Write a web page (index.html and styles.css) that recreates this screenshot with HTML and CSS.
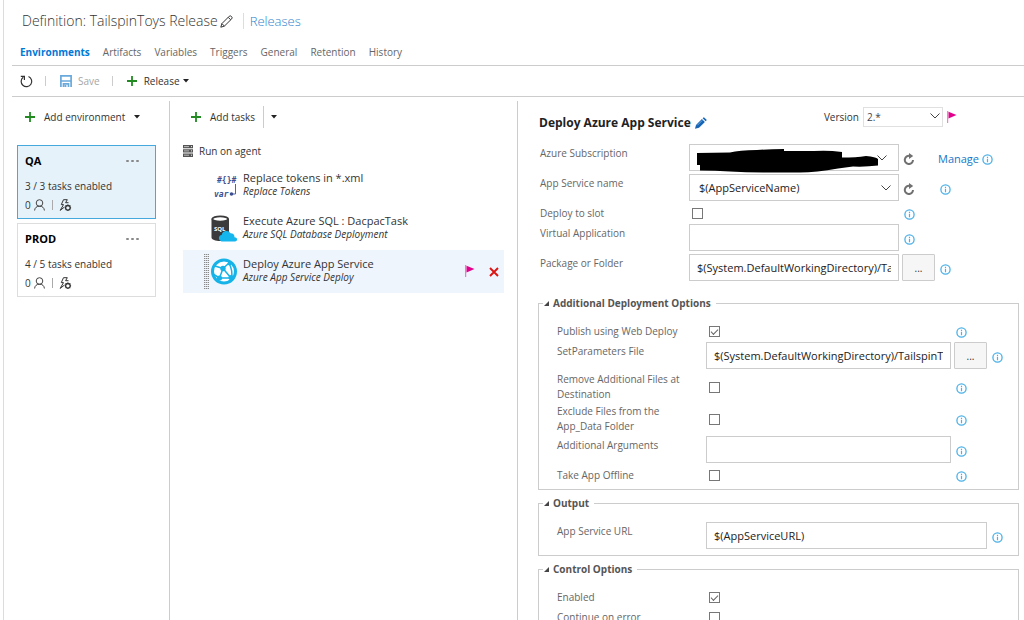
FILE: index.html
```html
<!DOCTYPE html>
<html lang="en">
<head>
<meta charset="utf-8">
<title>Definition: TailspinToys Release</title>
<link rel="stylesheet" href="styles.css">
</head>
<body>
<svg class="defs" aria-hidden="true">
  <symbol id="info" viewBox="0 0 11 11"><circle cx="5.5" cy="5.5" r="4.6" fill="none" stroke="#4bb0e8" stroke-width="1.3"/><path d="M5.5 4.8v3.4M5.5 2.8v1.1" stroke="#4bb0e8" stroke-width="1.2"/></symbol>
  <symbol id="plus" viewBox="0 0 10 10"><path d="M5 0v10M0 5h10" stroke="#218a21" stroke-width="1.8"/></symbol>
  <symbol id="caret" viewBox="0 0 6 4"><path d="M0 0h6L3 3.6z" fill="#222"/></symbol>
  <symbol id="chevron" viewBox="0 0 10 6"><path d="M.5.5L5 5l4.500-4.500" fill="none" stroke="#444"/></symbol>
  <symbol id="reload" viewBox="0 0 12 12"><path d="M10 7A4.100 4.100 0 1 1 7 3" fill="none" stroke="#707070" stroke-width="2"/><path d="M6 0l4.200 3.100L6 6z" fill="#707070"/></symbol>
  <symbol id="person" viewBox="0 0 11 12"><circle cx="5.500" cy="4" r="3.300" fill="none" stroke="#444"/><path d="M.6 11.500C.8 8.800 2.500 7.200 5.500 7.200s4.700 1.600 4.900 4.300" fill="none" stroke="#444"/></symbol>
  <symbol id="trigger" viewBox="0 0 13 13"><path d="M4.500.7h3.800L6.600 3.700h2.900M4.500.7L2.300 5.600h2.200L1.200 11.400 5.500 8" fill="none" stroke="#333"/><circle cx="8.900" cy="8.800" r="2.300" fill="none" stroke="#333" stroke-width="1.300"/><path d="M8.900 5.500v1M8.900 11v1M5.700 8.800h1M11.100 8.800h1M6.600 6.500l.8.8M11.200 6.500l-.8.8M6.600 11.100l.8-.8M11.200 11.100l-.8-.8" stroke="#333"/></symbol>
  <symbol id="flag" viewBox="0 0 10 13"><path d="M.7 0v12" stroke="#e3008c" stroke-opacity=".6"/><path d="M1.500.8L9.500 4 1.500 7.500z" fill="#e3008c"/></symbol>
</svg>
<div class="app">
  <main class="page">
    <header class="titlebar">
      <h1>Definition: TailspinToys Release</h1>
      <button class="icon-button" aria-label="Rename"><svg width="13" height="13" viewBox="0 0 13 13"><path d="M.8 12.200L1.900 8.600 9.200 1.300Q10.300.3 11.500 1.500t.2 2.400L4.400 11.100zM8.200 2.300l2.500 2.500M1.900 8.600l2.500 2.500" fill="none" stroke="#333"/></svg></button>
      <a class="crumb" href="#">Releases</a>
    </header>
    <nav class="tabs">
      <a class="active" href="#">Environments</a><a href="#">Artifacts</a><a href="#">Variables</a><a href="#">Triggers</a><a href="#">General</a><a href="#">Retention</a><a href="#">History</a>
    </nav>
    <div class="toolbar">
      <button class="icon-button" aria-label="Refresh"><svg width="13" height="13" viewBox="0 0 13 13"><path d="M8.500 1.500A5.300 5.300 0 1 1 3.200 2.200M.8 1.300h3.600v3.600" fill="none" stroke="#333" stroke-width="1.200"/></svg></button>
      <span class="bar"></span>
      <button class="save" disabled><svg width="12" height="12" viewBox="0 0 12 12"><path d="M.9 12V.9h10.200V12M.9 6h10.200M3.500 12V8.800h5V12M5.500 10v2" fill="none" stroke="#69a9dc" stroke-width="1.700"/></svg>Save</button>
      <span class="bar"></span>
      <button class="release"><svg width="10" height="10"><use href="#plus"/></svg>Release<svg class="near" width="6" height="4"><use href="#caret"/></svg></button>
    </div>
    <div class="columns">
      <section class="environments">
        <button class="add"><svg width="10" height="10"><use href="#plus"/></svg>Add environment<svg width="6" height="4"><use href="#caret"/></svg></button>
        <article class="card selected">
          <div class="card-head"><h2>QA</h2><button class="more" aria-label="More actions"><i></i><i></i><i></i></button></div>
          <p>3 / 3 tasks enabled</p>
          <div class="card-foot">0<svg width="11" height="12"><use href="#person"/></svg><span class="bar"></span><svg width="13" height="13"><use href="#trigger"/></svg></div>
        </article>
        <article class="card">
          <div class="card-head"><h2>PROD</h2><button class="more" aria-label="More actions"><i></i><i></i><i></i></button></div>
          <p>4 / 5 tasks enabled</p>
          <div class="card-foot">0<svg width="11" height="12"><use href="#person"/></svg><span class="bar"></span><svg width="13" height="13"><use href="#trigger"/></svg></div>
        </article>
      </section>
      <section class="tasks">
        <div class="split">
          <button class="add"><svg width="10" height="10"><use href="#plus"/></svg>Add tasks</button>
          <button class="drop" aria-label="More task options"><svg width="6" height="4"><use href="#caret"/></svg></button>
        </div>
        <div class="agent"><svg width="10" height="12" viewBox="0 0 10 12"><path d="M0 0h10v3.200H0zM0 4.300h10v3.200H0zM0 8.600h10V12H0z" fill="#555"/><path d="M1 1.600h5M1 5.900h5M1 10.200h5" stroke="#bbb"/><path d="M8 1.600h1M8 5.900h1M8 10.200h1" stroke="#eee"/></svg>Run on agent</div>
        <ul class="task-list">
          <li>
            <svg class="task-icon" width="26" height="27" viewBox="0 0 26 27"><g fill="#3d4f91" font-family="DejaVu Sans Mono, monospace" font-weight="bold"><text x="6" y="11" font-size="8">#{}#</text><text x="3" y="25" font-size="8" font-style="italic">var</text></g><path d="M24.500 12v10h-4" fill="none" stroke="#5364a4"/><circle cx="20.500" cy="22" r="1.800" fill="#3d4f91"/></svg>
            <div class="task-text"><strong>Replace tokens in *.xml</strong><em>Replace Tokens</em></div>
          </li>
          <li>
            <svg class="task-icon" width="26" height="27" viewBox="0 0 26 27"><path d="M.5 3.500v19c0 2 4 3.500 8.700 3.500s8.800-1.500 8.800-3.500v-19z" fill="#3b3b3d"/><ellipse cx="9.200" cy="4" rx="7.800" ry="2.700" fill="#fff" stroke="#3b3b3d" stroke-width="1.800"/><text x="3" y="16" font-size="6" font-weight="bold" font-family="Open Sans, sans-serif" fill="#fff">SQL</text><path d="M10.500 26.500a3.300 3.300 0 0 1 .2-6.500 4.800 4.800 0 0 1 8.800-1.800 4 4 0 0 1 4 4c3.500.2 3.200 4.300.5 4.300z" fill="#15b5ee"/></svg>
            <div class="task-text"><strong>Execute Azure SQL : DacpacTask</strong><em>Azure SQL Database Deployment</em></div>
          </li>
          <li class="current">
            <span class="grip"></span>
            <svg class="task-icon" width="26" height="27" viewBox="0 0 26 27"><circle cx="13" cy="13.500" r="11.500" fill="#fff" stroke="#16b3e8" stroke-width="3"/><g fill="none" stroke="#16b3e8" stroke-width="1.500"><path d="M4 8l8 2.500 8 9.500M12 10.500L18 5M12 10.500L8.500 20l12 0M2 16l6.500 4M18 5Q22 13 20.500 20"/></g><circle cx="12" cy="10.500" r="2.700" fill="#16b3e8"/><circle cx="18.500" cy="5.500" r="1.900" fill="#16b3e8"/><circle cx="8.500" cy="20" r="2.600" fill="#16b3e8"/><circle cx="20" cy="19.500" r="2.500" fill="#16b3e8"/></svg>
            <div class="task-text"><strong>Deploy Azure App Service</strong><em>Azure App Service Deploy</em></div>
            <svg width="10" height="13"><use href="#flag"/></svg>
            <button class="remove" aria-label="Remove task"><svg width="10" height="10" viewBox="0 0 10 10"><path d="M1 1l8 8M9 1L1 9" stroke="#dc1414" stroke-width="1.900"/></svg></button>
          </li>
        </ul>
      </section>
      <section class="details">
        <div class="details-head">
          <h2>Deploy Azure App Service</h2>
          <button class="icon-button" aria-label="Edit name"><svg width="12" height="12" viewBox="0 0 12 12"><path d="M0 11.800l1-3.900L6.900 2l3 3L4 10.800z" fill="#1764b5"/><path d="M7.600 1.300L8.900.2 11.800 3l-1.200 1.300z" fill="#1764b5"/><path d="M2.300 8.300l5-5" stroke="#69a9dc"/></svg></button>
          <div class="version">
            <label for="version">Version</label>
            <span class="picker"><select id="version"><option>2.*</option></select><svg width="10" height="6"><use href="#chevron"/></svg></span>
            <svg width="10" height="13"><use href="#flag"/></svg>
          </div>
        </div>
        <div class="fields main-fields">
          <div class="row">
            <label for="subscription">Azure Subscription</label>
            <span class="picker raised">
              <select id="subscription"><option></option></select>
              <svg class="redaction" viewBox="0 0 182 24"><path d="M0 4l33-.5Q42 1 60 1q12-1 27-1v2h30q14-1 28 1v5.500q14 0 24-1.500 10 1 12 3v6.500q-12 1.500-25 1l-15 2q-22 4-38 4H66q-17 0-33-1-15-1-30-1v-5.500H0z"/></svg>
              <svg width="10" height="6"><use href="#chevron"/></svg>
            </span>
            <span class="extras"><button class="reload" aria-label="Refresh subscriptions"><svg width="12" height="12"><use href="#reload"/></svg></button><a class="manage" href="#">Manage</a><svg class="info" width="11" height="11"><use href="#info"/></svg></span>
          </div>
          <div class="row">
            <label for="service">App Service name</label>
            <span class="picker"><select id="service"><option>$(AppServiceName)</option></select><svg width="10" height="6"><use href="#chevron"/></svg></span>
            <span class="extras"><button class="reload" aria-label="Refresh services"><svg width="12" height="12"><use href="#reload"/></svg></button><svg class="info after-reload" width="11" height="11"><use href="#info"/></svg></span>
          </div>
          <div class="row check">
            <label for="slot">Deploy to slot</label>
            <input id="slot" type="checkbox">
            <span class="extras"><svg class="info" width="11" height="11"><use href="#info"/></svg></span>
          </div>
          <div class="row">
            <label for="virtual">Virtual Application</label>
            <input id="virtual" type="text">
            <span class="extras"><svg class="info" width="11" height="11"><use href="#info"/></svg></span>
          </div>
          <div class="row">
            <label for="package">Package or Folder</label>
            <input id="package" type="text" value="$(System.DefaultWorkingDirectory)/TailspinToys">
            <span class="extras"><button class="browse" aria-label="Browse package">...</button><svg class="info" width="11" height="11"><use href="#info"/></svg></span>
          </div>
        </div>
        <fieldset class="fields">
          <legend><button><svg width="5" height="5" viewBox="0 0 6 6"><path d="M6 0v6H0z" fill="#444"/></svg>Additional Deployment Options</button></legend>
          <div class="row check">
            <label for="webdeploy">Publish using Web Deploy</label>
            <input id="webdeploy" type="checkbox" checked>
            <span class="extras"><svg class="info" width="11" height="11"><use href="#info"/></svg></span>
          </div>
          <div class="row">
            <label for="params">SetParameters File</label>
            <input id="params" type="text" value="$(System.DefaultWorkingDirectory)/TailspinToys">
            <span class="extras"><button class="browse" aria-label="Browse parameters">...</button><svg class="info" width="11" height="11"><use href="#info"/></svg></span>
          </div>
          <div class="row double">
            <label for="removefiles">Remove Additional Files at Destination</label>
            <input id="removefiles" type="checkbox">
            <span class="extras"><svg class="info" width="11" height="11"><use href="#info"/></svg></span>
          </div>
          <div class="row double">
            <label for="exclude">Exclude Files from the App_Data Folder</label>
            <input id="exclude" type="checkbox">
            <span class="extras"><svg class="info" width="11" height="11"><use href="#info"/></svg></span>
          </div>
          <div class="row">
            <label for="arguments">Additional Arguments</label>
            <input id="arguments" type="text">
            <span class="extras"><svg class="info" width="11" height="11"><use href="#info"/></svg></span>
          </div>
          <div class="row check">
            <label for="offline">Take App Offline</label>
            <input id="offline" type="checkbox">
            <span class="extras"><svg class="info" width="11" height="11"><use href="#info"/></svg></span>
          </div>
        </fieldset>
        <fieldset class="fields wide">
          <legend><button><svg width="5" height="5" viewBox="0 0 6 6"><path d="M6 0v6H0z" fill="#444"/></svg>Output</button></legend>
          <div class="row">
            <label for="url">App Service URL</label>
            <input id="url" type="text" value="$(AppServiceURL)">
            <span class="extras"><svg class="info" width="11" height="11"><use href="#info"/></svg></span>
          </div>
        </fieldset>
        <fieldset class="fields">
          <legend><button><svg width="5" height="5" viewBox="0 0 6 6"><path d="M6 0v6H0z" fill="#444"/></svg>Control Options</button></legend>
          <div class="row check">
            <label for="enabled">Enabled</label>
            <input id="enabled" type="checkbox" checked>
          </div>
          <div class="row check">
            <label for="continue">Continue on error</label>
            <input id="continue" type="checkbox">
          </div>
        </fieldset>
      </section>
    </div>
  </main>
</div>
</body>
</html>
```
FILE: styles.css
```css
* { box-sizing: border-box; }
body {
  margin: 0;
  background: #fff;
  color: #333;
  font: 10px/16px "Open Sans", "Noto Sans", sans-serif;
}
h1, h2, p, ul { margin: 0; padding: 0; }
a { text-decoration: none; }
svg { display: block; flex: none; }
button { padding: 0; border: 0; background: none; color: inherit; font: inherit; }
.defs { position: absolute; width: 0; height: 0; }
.app { height: 100vh; padding-left: 3px; overflow: hidden; }
.page {
  display: flex;
  flex-direction: column;
  height: 100%;
  padding-left: 8px;
  border-left: 1px solid #dcdcdc;
}
.titlebar { display: flex; align-items: center; height: 42px; padding-left: 10px; }
h1 { font-size: 14px; font-weight: 300; line-height: 20px; }
.titlebar .icon-button { margin-left: 2px; }
.crumb {
  margin-left: 10px;
  padding-left: 6px;
  border-left: 1px solid #ddd;
  color: #2e83cc;
  font-size: 13px;
  font-weight: 300;
}
.tabs { display: flex; gap: 13px; height: 24px; padding-left: 8px; border-bottom: 1px solid #ccc; line-height: 20px; }
.tabs a { color: #666; }
.tabs .active { color: #0078d7; font-weight: 700; }
.toolbar { display: flex; align-items: center; height: 31px; padding-left: 8px; border-bottom: 1px solid #ccc; }
.toolbar button { display: flex; align-items: center; }
.bar { width: 1px; height: 10px; background: #aaa; }
.toolbar .bar { margin: 0 14px 0 12px; background: #ccc; }
.save { gap: 6px; color: #a6a6a6; }
.release { gap: 7px; }
.release .near { margin-left: -4px; }
.columns { display: grid; flex: 1; grid-template-columns: 158px 348px minmax(0, 1fr); min-height: 0; padding-top: 4px; }
.environments, .tasks { border-right: 1px solid #ccc; }
.environments { padding: 5px 13px 0 5px; }
.add { display: flex; align-items: center; gap: 9px; height: 22px; padding-left: 8px; }
.environments .add { margin-bottom: 17px; }
.card { height: 74px; margin-bottom: 4px; padding: 7px; border: 1px solid #ddd; }
.card.selected { border-color: #45a9de; background: #e6f2fa; }
.card-head { display: flex; justify-content: space-between; align-items: center; }
.card h2 { color: #000; font-size: 11px; line-height: 16px; }
.more { display: flex; gap: 2px; margin-right: 9px; }
.more i { width: 3px; height: 2px; border-radius: 1px; background: #888; }
.card p { margin-top: 9px; }
.card-foot { display: flex; align-items: center; gap: 3px; height: 16px; margin-top: 3px; }
.card-foot .bar { margin: 0 3px 0 4px; }
.tasks { padding: 5px 13px 0; }
.split { display: flex; align-items: center; }
.drop { height: 22px; margin-left: 8px; padding-left: 7px; border-left: 1px solid #ccc; }
.agent { display: flex; align-items: center; gap: 6px; height: 36px; padding-top: 9px; }
.task-list { list-style: none; }
.task-list li { display: flex; align-items: center; height: 43px; padding: 0 5px 0 28px; }
.task-list .current { padding-left: 21px; background: #eef5fc; }
.grip { width: 5px; height: 37px; margin-right: 2px; background: repeating-linear-gradient(#eef5fc 0 1px, transparent 1px 2px), repeating-linear-gradient(90deg, #888 0 1px, #ccd 1px 2px); }
.task-text { display: flex; flex: 1; flex-direction: column; margin-left: 6px; padding-bottom: 2px; }
.task-text strong { font-size: 11px; font-weight: 400; line-height: 14px; }
.task-text em { line-height: 13px; }
.remove { margin-left: 14px; }
.details { min-width: 0; padding: 6px 5px 0 20px; overflow: hidden; }
.details-head { display: flex; align-items: flex-start; height: 37px; padding-left: 1px; }
.details-head h2 { padding-top: 6px; color: #222; font-size: 12px; line-height: 20px; }
.details-head .icon-button { margin: 10px 0 0 4px; }
.version { display: flex; align-items: center; gap: 4px; margin: 0 62px 0 auto; }
.version .picker { width: 80px; }
.version select { height: 20px; border-color: #e0e0e0; color: #444; }
.picker { position: relative; display: block; }
.picker select { width: 100%; }
.picker > svg { position: absolute; top: 50%; right: 8px; margin-top: -4px; pointer-events: none; }
.version .picker > svg { right: 3px; }
.raised > svg { right: 12px; }
.raised .redaction { top: 9px; right: 20px; width: 182px; height: 24px; }
select, input[type="text"] {
  width: 100%;
  min-width: 0;
  height: 27px;
  margin: 0;
  padding: 0 7px;
  border: 1px solid #ccc;
  border-radius: 0;
  background: #fff;
  color: #222;
  font: inherit;
  font-size: 11px;
  appearance: none;
}
.picker select { padding-left: 9px; }
.version .picker select { padding-left: 3px; font-size: 10px; }
.row { display: grid; grid-template-columns: 149px minmax(0, 1fr) 63px; height: 30px; }
.main-fields { padding-left: 2px; }
.main-fields .row { grid-template-columns: 149px minmax(0, 1fr) 120px; }
.wide .row { grid-template-columns: 149px minmax(0, 1fr) 27px; }
.row label { color: #666; line-height: 18px; }
.row.check { height: 20px; }
.row.double { height: 32px; }
.double label { padding-right: 16px; line-height: 15px; }
input[type="checkbox"] {
  width: 11px;
  height: 11px;
  margin: 4px 3px;
  border: 1px solid #777;
  background: #fff;
  appearance: none;
}
.double input[type="checkbox"] { margin-top: 10px; }
input[type="checkbox"]:checked::after {
  display: block;
  width: 6px;
  height: 3px;
  margin: 2px 1px;
  border: solid #666;
  border-width: 0 0 1px 1px;
  content: "";
  transform: rotate(-45deg);
}
.extras { display: flex; align-items: center; height: 30px; }
.check .extras { height: 20px; }
.double .extras { height: 32px; }
.info { margin-left: 5px; }
.after-reload { margin-left: 25px; }
.reload { margin-left: 4px; }
.manage { margin-left: 23px; color: #1377c9; font-size: 11px; }
.manage + .info { margin-left: 3px; }
.browse { align-self: flex-start; width: 33px; height: 27px; margin-left: 3px; border: 1px solid #ccc; border-radius: 1px; background: #f6f6f6; }
fieldset { min-width: 0; margin: 0 0 5px; padding: 11px 4px 3px 18px; border: 1px solid #ccc; }
.main-fields + fieldset { margin-top: 11px; }
legend { margin-left: -14px; padding: 0 5px 0 1px; }
legend button { display: flex; align-items: center; gap: 4px; color: #555; font-weight: 700; line-height: 16px; }
```
